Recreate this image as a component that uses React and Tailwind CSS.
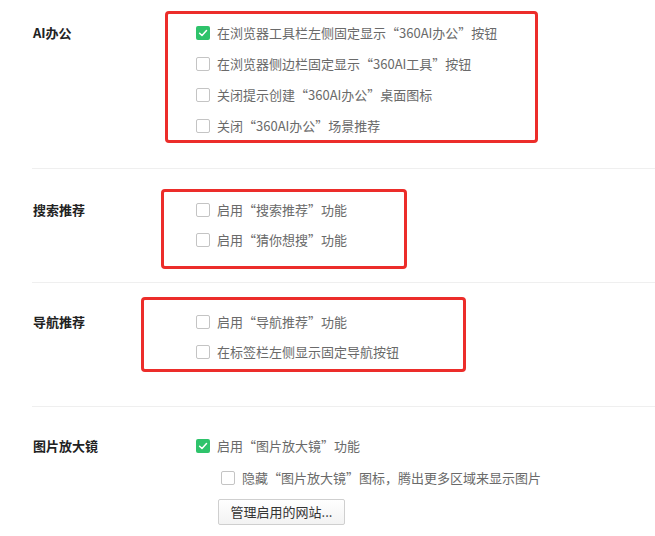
import React from "react";

const font = { fontFamily: '"Noto Sans CJK SC", "Noto Sans", sans-serif' };

function Box({ checked }) {
  if (checked) {
    return (
      <span className="flex h-[14px] w-[14px] shrink-0 items-center justify-center rounded-[2px] bg-[#2ec36b]">
        <svg width="10" height="10" viewBox="0 0 10 10" fill="none">
          <path d="M1.6 5.2 L4 7.5 L8.5 2.6" stroke="white" strokeWidth="1.5" strokeLinecap="round" strokeLinejoin="round" />
        </svg>
      </span>
    );
  }
  return <span className="h-[14px] w-[14px] shrink-0 rounded-[2px] border border-[#c4c4c4] bg-white" />;
}

function Opt({ checked, text, h = "h-[31px]", indent = "" }) {
  return (
    <div className={`flex items-center ${h} ${indent}`}>
      <Box checked={checked} />
      <span className="ml-[7px] text-[13px] text-[#6a6a6a] whitespace-nowrap">{text}</span>
    </div>
  );
}

function Section({ label, children, pt, pb, border = true, lh = "h-[31px]" }) {
  return (
    <div className={`flex ${pt} ${pb} ${border ? "border-b border-[#efefef]" : ""}`}>
      <div className={`flex ${lh} w-[164px] shrink-0 items-center pl-[1px] text-[13px] font-bold text-[#222]`}>{label}</div>
      <div className="flex flex-col">{children}</div>
    </div>
  );
}

export default function App() {
  return (
    <div className="relative h-[536px] w-[655px] overflow-hidden bg-white" style={font}>
      <div className="ml-[32px]">
        <Section label="AI办公" pt="pt-[17px]" pb="pb-[27px]">
          <Opt checked text="在浏览器工具栏左侧固定显示“360AI办公”按钮" />
          <Opt text="在浏览器侧边栏固定显示“360AI工具”按钮" />
          <Opt text="关闭提示创建“360AI办公”桌面图标" />
          <Opt text="关闭“360AI办公”场景推荐" />
        </Section>
        <Section label="搜索推荐" pt="pt-[26px]" pb="pb-[27px]" lh="h-[30px]">
          <Opt h="h-[30px]" text="启用“搜索推荐”功能" />
          <Opt h="h-[30px]" text="启用“猜你想搜”功能" />
        </Section>
        <Section label="导航推荐" pt="pt-[24px]" pb="pb-[39px]" lh="h-[30px]">
          <Opt h="h-[30px]" text="启用“导航推荐”功能" />
          <Opt h="h-[30px]" text="在标签栏左侧显示固定导航按钮" />
        </Section>
        <Section label="图片放大镜" pt="pt-[24px]" pb="pb-[10px]" border={false} lh="h-[30px]">
          <Opt h="h-[30px]" checked text="启用“图片放大镜”功能" />
          <Opt h="h-[34px]" indent="pl-[25px]" text="隐藏“图片放大镜”图标，腾出更多区域来显示图片" />
          <div className="pl-[22px] pt-[3px]">
            <button className="h-[26px] w-[127px] rounded-[2px] border border-[#cfcfcf] bg-gradient-to-b from-white to-[#f3f3f3] text-[13px] text-[#333]">
              管理启用的网站...
            </button>
          </div>
        </Section>
      </div>

      <div className="pointer-events-none absolute left-[165px] top-[11px] h-[132px] w-[373px] rounded-[4px] border-[3px] border-[#ec2d2a]" />
      <div className="pointer-events-none absolute left-[161px] top-[189px] h-[80px] w-[246px] rounded-[4px] border-[3px] border-[#ec2d2a]" />
      <div className="pointer-events-none absolute left-[141px] top-[297px] h-[75px] w-[325px] rounded-[4px] border-[3px] border-[#ec2d2a]" />
    </div>
  );
}
